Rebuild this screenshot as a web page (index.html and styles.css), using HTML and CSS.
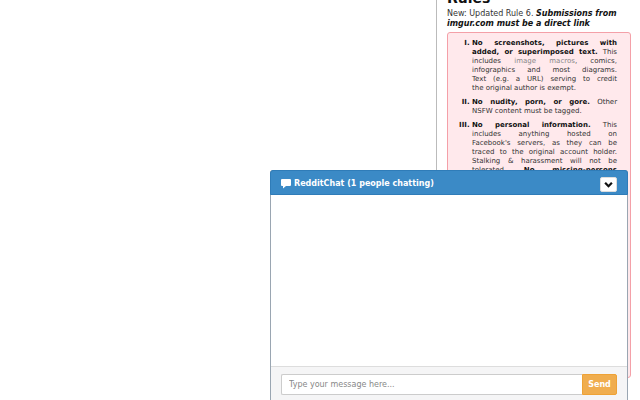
FILE: index.html
```
<!DOCTYPE html>
<html lang="en">
<head>
    <meta charset="UTF-8">
    <meta name="viewport" content="width=device-width, initial-scale=1.0">
    <title>RedditChat</title>
    <link rel="stylesheet" href="styles.css">
</head>
<body>
    <aside class="side">
        <h2>Rules</h2>
        <p class="notice">New: Updated Rule 6. <strong><em>Submissions from imgur.com must be a direct link</em></strong></p>
        <div class="rules">
            <ol>
                <li><strong>No screenshots, pictures with added, or superimposed text.</strong> This includes <a href="#">image macros</a>, comics, infographics and most diagrams. Text&nbsp;(e.g.&nbsp;a URL) serving to credit the&nbsp;original author is exempt.</li>
                <li><strong>No nudity, porn, or gore.</strong> Other NSFW&nbsp;content must be tagged.</li>
                <li><strong>No personal information.</strong> This includes anything hosted on Facebook's&nbsp;servers, as they can be traced&nbsp;to&nbsp;the original account holder. Stalking&nbsp;&amp;&nbsp;harassment will not be tolerated.&nbsp;<strong>No&nbsp;missing-persons requests.</strong></li>
            </ol>
        </div>
    </aside>

    <section class="chat">
        <header class="chat-header">
            <svg class="chat-icon" viewBox="0 0 10 10" aria-hidden="true">
                <path d="M1 0h8q1 0 1 1v5q0 1-1 1H5L2 9.500V7H1Q0 7 0 6V1q0-1 1-1z" fill="#fff"/>
            </svg>
            <span class="chat-title">RedditChat (1 people chatting)</span>
            <button class="toggle" type="button" aria-label="Minimize chat">
                <svg viewBox="0 0 8 8" aria-hidden="true">
                    <path d="M1 2.500l3 3 3-3" fill="none" stroke="#111" stroke-width="2"/>
                </svg>
            </button>
        </header>
        <div class="messages"></div>
        <form class="chat-footer">
            <input class="message" type="text" placeholder="Type your message here..." aria-label="Message">
            <button class="send" type="button">Send</button>
        </form>
    </section>
</body>
</html>
```
FILE: styles.css
```
* {
    box-sizing: border-box;
}
body {
    margin: 0;
    height: 100vh;
    overflow: hidden;
    background: #fff;
    font-family: Verdana, "DejaVu Sans", sans-serif;
    font-size: 8px;
    color: #333;
    display: flex;
    justify-content: flex-end;
}
.side {
    width: 204px;
    height: 100%;
    padding: 0 9px 22px 10px;
    border-left: 1px solid #bbb;
    display: flex;
    flex-direction: column;
}
h2 {
    margin: -9px 0 3px;
    font-size: 14px;
    line-height: 15px;
    color: #111;
}
.notice {
    margin: 0 0 3px;
    line-height: 10px;
}
strong {
    color: #111;
}
.rules {
    flex: 1;
    padding: 6px 13px 0 24px;
    background: #ffe9ec;
    border: 1px solid #f4a0a8;
    border-radius: 3px;
}
ol {
    margin: 0;
    padding: 0;
    list-style: upper-roman;
    text-align: justify;
    font-size: 7px;
    line-height: 9px;
}
li {
    margin-bottom: 5px;
}
li::marker {
    font-weight: bold;
    color: #111;
}
li a {
    color: #888;
    text-decoration: none;
}
.chat {
    position: fixed;
    right: 12px;
    bottom: 0;
    width: 358px;
    background: #fff;
    border: 1px solid #9aa6b2;
    border-bottom: 0;
    border-radius: 3px 3px 0 0;
}
.chat-header {
    display: flex;
    align-items: center;
    gap: 3px;
    height: 25px;
    margin: -1px -1px 0;
    padding: 2px 10px 0;
    background: #3b8ac6;
    border: 1px solid #2f7cb8;
    border-radius: 3px 3px 0 0;
    color: #fff;
}
.chat-icon {
    width: 10px;
    height: 10px;
}
.chat-title {
    flex: 1;
    font-weight: bold;
}
.toggle {
    display: flex;
    align-items: center;
    justify-content: center;
    width: 17px;
    height: 15px;
    margin-top: 2px;
    padding: 0;
    background: #fff;
    border: 1px solid #ddd;
    border-radius: 2px;
}
.toggle svg {
    width: 9px;
    height: 9px;
}
.messages {
    height: 171px;
}
.chat-footer {
    display: flex;
    padding: 7px 10px 5px;
    background: #f5f5f6;
    border-top: 1px solid #ddd;
}
.message {
    flex: 1;
    height: 21px;
    padding: 0 7px;
    border: 1px solid #ccc;
    border-right: 0;
    border-radius: 2px 0 0 2px;
    background: #fff;
    font-family: inherit;
    font-size: 8px;
}
.message::placeholder {
    color: #888;
}
.send {
    width: 35px;
    height: 21px;
    padding: 0;
    background: #f0ad4e;
    border: 1px solid #eea236;
    border-radius: 0 2px 2px 0;
    color: #fff;
    font-family: inherit;
    font-size: 8px;
    font-weight: bold;
}
```
